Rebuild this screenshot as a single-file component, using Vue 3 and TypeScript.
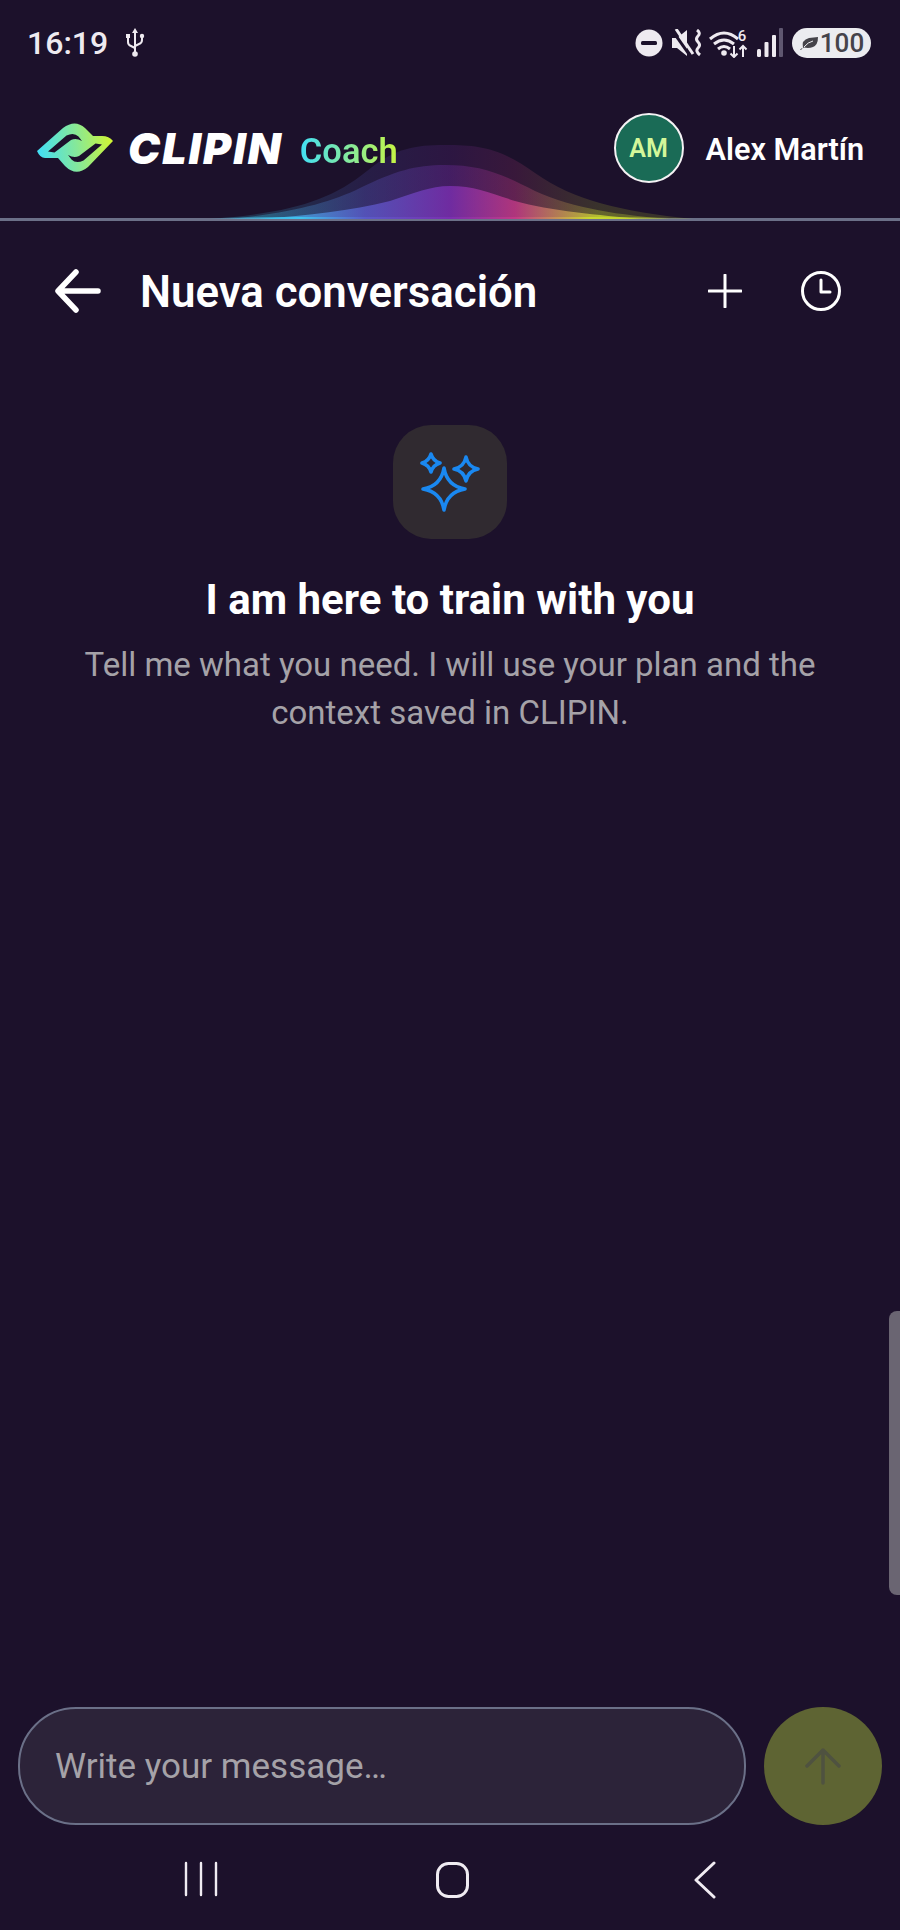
<script setup lang="ts">
const title = 'Nueva conversación'
</script>

<template>
  <div class="page">
    <div class="status">
      <div class="status-left">
        <span class="time">16:19</span>
        <svg class="usb" width="20" height="30" viewBox="0 0 20 30" fill="none" stroke="#eeeaf0" stroke-width="2">
          <path d="M10 2v25M3 9v5q0 3 3 4l4 2M17 9v3q0 3-3 4l-4 2" />
          <path d="M10 0l3 5H7z" fill="#eeeaf0" stroke="none" />
          <circle cx="10" cy="26" r="2.8" fill="#eeeaf0" stroke="none" />
          <rect x="1" y="6" width="4" height="4" fill="#eeeaf0" stroke="none" />
          <circle cx="17" cy="8" r="2.2" fill="#eeeaf0" stroke="none" />
        </svg>
      </div>
      <div class="status-right">
        <svg width="28" height="28" viewBox="0 0 28 28"><circle cx="14" cy="14" r="13.5" fill="#eeeaf0" /><rect x="6" y="12" width="16" height="4" rx="1.5" fill="#1c112b" /></svg>
        <svg width="31" height="28" viewBox="0 0 31 28" fill="#eeeaf0">
          <path d="M1 9h5l10-8v26l-10-8H1z" />
          <path d="M1 1l19 27" stroke="#1c112b" stroke-width="3" />
          <path d="M5 0l17 25" stroke="#eeeaf0" stroke-width="3" />
          <path d="M26 1q4 3 1 6t0 6 0 6 2 7" fill="none" stroke="#eeeaf0" stroke-width="3" />
        </svg>
        <svg class="wifi" width="41" height="30" viewBox="0 0 41 30" fill="none" stroke="#eeeaf0" stroke-width="3">
          <path d="M2 11Q16-1 30 11M6 16q10-8 20 0M10 21q6-5 12 0" />
          <circle cx="16" cy="25" r="2.8" fill="#eeeaf0" stroke="none" />
          <path d="M26 18v11M22.500 25.500 26 29l3.500-3.500M35 29V18M31.500 21.500 35 18l3.500 3.500" stroke-width="2" />
          <text x="34" y="13" class="six">6</text>
        </svg>
        <svg width="26" height="30" viewBox="0 0 26 30" fill="#eeeaf0">
          <rect x="0" y="21" width="4" height="8" rx="1.5" />
          <rect x="7.500" y="14" width="4" height="15" rx="1" />
          <rect x="15" y="7" width="4" height="22" rx="1" />
          <rect x="22" y="0" width="4" height="29" rx="1" fill="#5f5770" />
        </svg>
        <div class="battery">
          <svg width="20" height="16" viewBox="0 0 20 16">
            <path d="M1 15Q2 13 4 13 2 5 10 3L19 2Q19 10 14 12 10 13.5 5 12.5 3 13 2 15z" fill="#45434a" />
            <path d="M5 12Q9 7 14 6" fill="none" stroke="#ececf0" stroke-width="1" />
          </svg>
          <span>100</span>
        </div>
      </div>
    </div>

    <header class="brand">
      <svg class="wave" width="500" height="76" viewBox="0 0 500 76">
        <defs>
          <linearGradient id="waveGrad" gradientUnits="userSpaceOnUse" x1="0" x2="500" y1="0" y2="0">
            <stop offset="0.14" stop-color="#3fc4ee" />
            <stop offset="0.33" stop-color="#5a5ac8" />
            <stop offset="0.5" stop-color="#7a2fb0" />
            <stop offset="0.63" stop-color="#c23a86" />
            <stop offset="0.8" stop-color="#c8d92e" />
          </linearGradient>
          <linearGradient id="lineGrad" gradientUnits="userSpaceOnUse" x1="0" x2="500" y1="0" y2="0">
            <stop offset="0.04" stop-color="#3fc4ee" stop-opacity="0" />
            <stop offset="0.2" stop-color="#3fc4ee" />
            <stop offset="0.33" stop-color="#5a5ac8" />
            <stop offset="0.5" stop-color="#7a2fb0" />
            <stop offset="0.63" stop-color="#c23a86" />
            <stop offset="0.78" stop-color="#c8d92e" />
            <stop offset="0.94" stop-color="#c8d92e" stop-opacity="0" />
          </linearGradient>
        </defs>
        <path d="M10 76C90 70 130 58 167 28 195 5 215 2 245 2 280 2 300 5 335 30 375 58 420 68 493 76Z" fill="url(#waveGrad)" opacity="0.17" />
        <path d="M30 76C90 70 130 60 160 45 195 28 215 22 245 22 280 22 300 30 335 48 375 66 420 72 470 76Z" fill="url(#waveGrad)" opacity="0.3" />
        <path d="M60 76C110 72 150 68 190 58 215 50 230 43 250 43 275 43 290 50 315 58 350 68 400 72 440 76Z" fill="url(#waveGrad)" opacity="0.8" />
        <rect x="20" y="74" width="460" height="2" fill="url(#lineGrad)" />
      </svg>
      <div class="brand-left">
        <svg class="logo" width="82" height="50" viewBox="6 5 82 50">
          <defs>
            <linearGradient id="logoGrad" gradientUnits="userSpaceOnUse" x1="8" x2="84" y1="34" y2="24">
              <stop offset="0" stop-color="#42dff5" />
              <stop offset="0.5" stop-color="#85e89a" />
              <stop offset="1" stop-color="#d4f52e" />
            </linearGradient>
          </defs>
          <path d="M7 33 33 10Q45 1 55 10L63 18H72Q79 18 83 23L58 49Q46 59 35 48L28 40H15Q10 40 7 33Z" fill="url(#logoGrad)" />
          <path d="M18 33.500 36.500 17.500Q44 14 48.500 18.500L52 23Q46 19.500 41 22L24.500 34.500Z" fill="#1c112b" />
          <path d="M72 26.500 53.500 42.500Q46 46 41.500 41.500L38 37Q44 40.500 49 38L65.500 25.500Z" fill="#1c112b" />
        </svg>
        <span class="clipin">CLIPIN</span>
        <span class="coach">Coach</span>
      </div>
      <div class="user">
        <div class="avatar">AM</div>
        <span class="name">Alex Martín</span>
      </div>
    </header>

    <nav class="topbar">
      <button class="icon-btn back" aria-label="Volver">
        <svg width="48" height="44" viewBox="0 0 48 44" fill="none" stroke="#fff" stroke-width="5.500" stroke-linecap="round" stroke-linejoin="round">
          <path d="M44 22H5M22 3 4 22l18 19" />
        </svg>
      </button>
      <h1 class="title">{{ title }}</h1>
      <button class="icon-btn plus" aria-label="Nueva">
        <svg width="34" height="34" viewBox="0 0 34 34" stroke="#fff" stroke-width="3" stroke-linecap="round"><path d="M17 1v32M1 17h32" /></svg>
      </button>
      <button class="icon-btn clock" aria-label="Historial">
        <svg width="40" height="40" viewBox="0 0 40 40" fill="none" stroke="#fff" stroke-width="3" stroke-linecap="round" stroke-linejoin="round"><circle cx="20" cy="20" r="18.5" /><path d="M20 9v12h9" /></svg>
      </button>
    </nav>

    <main class="empty">
      <div class="tile">
        <svg width="60" height="60" viewBox="0 0 60 60" fill="none" stroke="#1a88f0" stroke-width="3.600" stroke-linejoin="round">
          <path d="M24 16Q27 34 45 37 27 40 24 58 21 40 3 37 21 34 24 16Z" />
          <path d="M11 2Q13 9 20 11 13 13 11 20 9 13 2 11 9 9 11 2Z" />
          <path d="M46 5Q48 15 58 17 48 19 46 29 44 19 34 17 44 15 46 5Z" />
        </svg>
      </div>
      <h2 class="heading">I am here to train with you</h2>
      <p class="sub">Tell me what you need. I will use your plan and the context saved in CLIPIN.</p>
    </main>

    <footer class="composer">
      <div class="input"><span>Write your message…</span></div>
      <button class="send" aria-label="Enviar">
        <svg width="38" height="38" viewBox="0 0 38 38" fill="none" stroke="#4f5240" stroke-width="3.500" stroke-linecap="round" stroke-linejoin="round"><path d="M19 36V3M3 19 19 3l16 16" /></svg>
      </button>
    </footer>

    <div class="navbar">
      <svg width="34" height="36" viewBox="0 0 34 36" stroke="#f0ecf2" stroke-width="2.400" stroke-linecap="round"><path d="M2 2v32M17 2v32M32 2v32" /></svg>
      <svg width="38" height="38" viewBox="0 0 38 38" fill="none" stroke="#f0ecf2" stroke-width="3"><rect x="3.500" y="2.500" width="30" height="33" rx="11" /></svg>
      <svg width="24" height="38" viewBox="0 0 24 38" fill="none" stroke="#f0ecf2" stroke-width="3" stroke-linecap="round" stroke-linejoin="round"><path d="M21 2 3 19l18 17" /></svg>
    </div>

    <div class="scrollbar"></div>
  </div>
</template>

<style scoped>
.page {
  position: relative;
  width: 900px;
  height: 1930px;
  overflow: hidden;
  display: flex;
  flex-direction: column;
  background: #1c112b;
  color: #fff;
  font-family: Roboto, "Liberation Sans", sans-serif;
}
.status {
  height: 86px;
  display: flex;
  align-items: center;
  justify-content: space-between;
  padding: 0 29px 0 27px;
}
.status-left { display: flex; align-items: center; gap: 17px; }
.time { font-size: 32px; font-weight: 500; color: #eeeaf0; line-height: 1; }
.status-right { display: flex; align-items: center; gap: 8px; }
.wifi { margin-left: -2px; }
.six { font: 500 15px Roboto, sans-serif; fill: #eeeaf0; stroke: none; text-anchor: middle; }
.battery {
  width: 79px;
  height: 30px;
  margin-left: 1px;
  border-radius: 15px;
  background: #ececf0;
  display: flex;
  align-items: center;
  justify-content: center;
  gap: 1px;
  color: #45434a;
  font-size: 26px;
  font-weight: 500;
}
.brand {
  position: relative;
  height: 135px;
  box-sizing: border-box;
  border-bottom: 3px solid #6b7088;
  display: flex;
  align-items: center;
  justify-content: space-between;
  padding: 0 36px 8px 36px;
}
.wave { position: absolute; left: 200px; bottom: -1px; }
.brand-left { position: relative; display: flex; align-items: center; }
.logo { margin-right: 10px; }
.clipin {
  font-family: Inter, Roboto, sans-serif;
  font-size: 43px;
  font-weight: 900;
  font-style: italic;
  letter-spacing: 2px;
  line-height: 1;
}
.coach {
  margin-left: 17px;
  margin-top: 6px;
  font-size: 34.500px;
  font-weight: 600;
  line-height: 1;
  background: linear-gradient(90deg, #42dff5, #c8f542);
  -webkit-background-clip: text;
  background-clip: text;
  color: transparent;
}
.user { position: relative; display: flex; align-items: center; gap: 22px; }
.avatar {
  width: 70px;
  height: 70px;
  box-sizing: border-box;
  border: 2px solid #f4f2f4;
  border-radius: 50%;
  background: #1a6b56;
  color: #d4f79a;
  display: flex;
  align-items: center;
  justify-content: center;
  font-size: 25px;
  font-weight: 600;
}
.name { font-size: 30.600px; font-weight: 600; padding-top: 2px; }
.topbar {
  height: 144px;
  box-sizing: border-box;
  display: flex;
  align-items: center;
  padding: 0 59px 4px 54px;
}
.icon-btn {
  padding: 0;
  border: 0;
  background: none;
  display: flex;
}
.title {
  margin: 4px 0 0 38px;
  flex: 1;
  font-size: 43.800px;
  font-weight: 600;
  line-height: 1;
}
.clock { margin-left: 59px; }
.empty {
  flex: 1;
  display: flex;
  flex-direction: column;
  align-items: center;
  padding-top: 60px;
}
.tile {
  width: 114px;
  height: 114px;
  border-radius: 38px;
  background: #302a30;
  display: flex;
  align-items: center;
  justify-content: center;
}
.heading {
  margin: 38px 0 0;
  font-size: 42px;
  font-weight: 700;
  line-height: 46px;
}
.sub {
  margin: 18px 0 0;
  width: 780px;
  text-align: center;
  font-size: 33px;
  line-height: 48px;
  color: #a5a2a8;
}
.composer {
  display: flex;
  gap: 18px;
  padding: 0 18px;
}
.input {
  flex: 1;
  height: 118px;
  box-sizing: border-box;
  border: 2px solid #6b7088;
  border-radius: 58px;
  background: #2c2339;
  display: flex;
  align-items: center;
  padding-left: 35px;
  font-size: 35px;
  color: #a5a2a8;
}
.send {
  width: 118px;
  height: 118px;
  padding: 0;
  border: 0;
  border-radius: 50%;
  background: #5e6433;
  display: flex;
  align-items: center;
  justify-content: center;
}
.navbar {
  height: 105px;
  box-sizing: border-box;
  padding: 36px 0 0;
  display: grid;
  grid-template-columns: 402px 298px 200px;
  align-items: start;
  justify-items: start;
}
.navbar svg:nth-child(1) { margin-left: 184px; }
.navbar svg:nth-child(2) { margin-left: 32px; }
.navbar svg:nth-child(3) { margin-left: -7px; }
.scrollbar {
  position: absolute;
  right: 0;
  top: 1311px;
  width: 11px;
  height: 284px;
  border-radius: 8px 0 0 8px;
  background: #6a6572;
}
</style>
